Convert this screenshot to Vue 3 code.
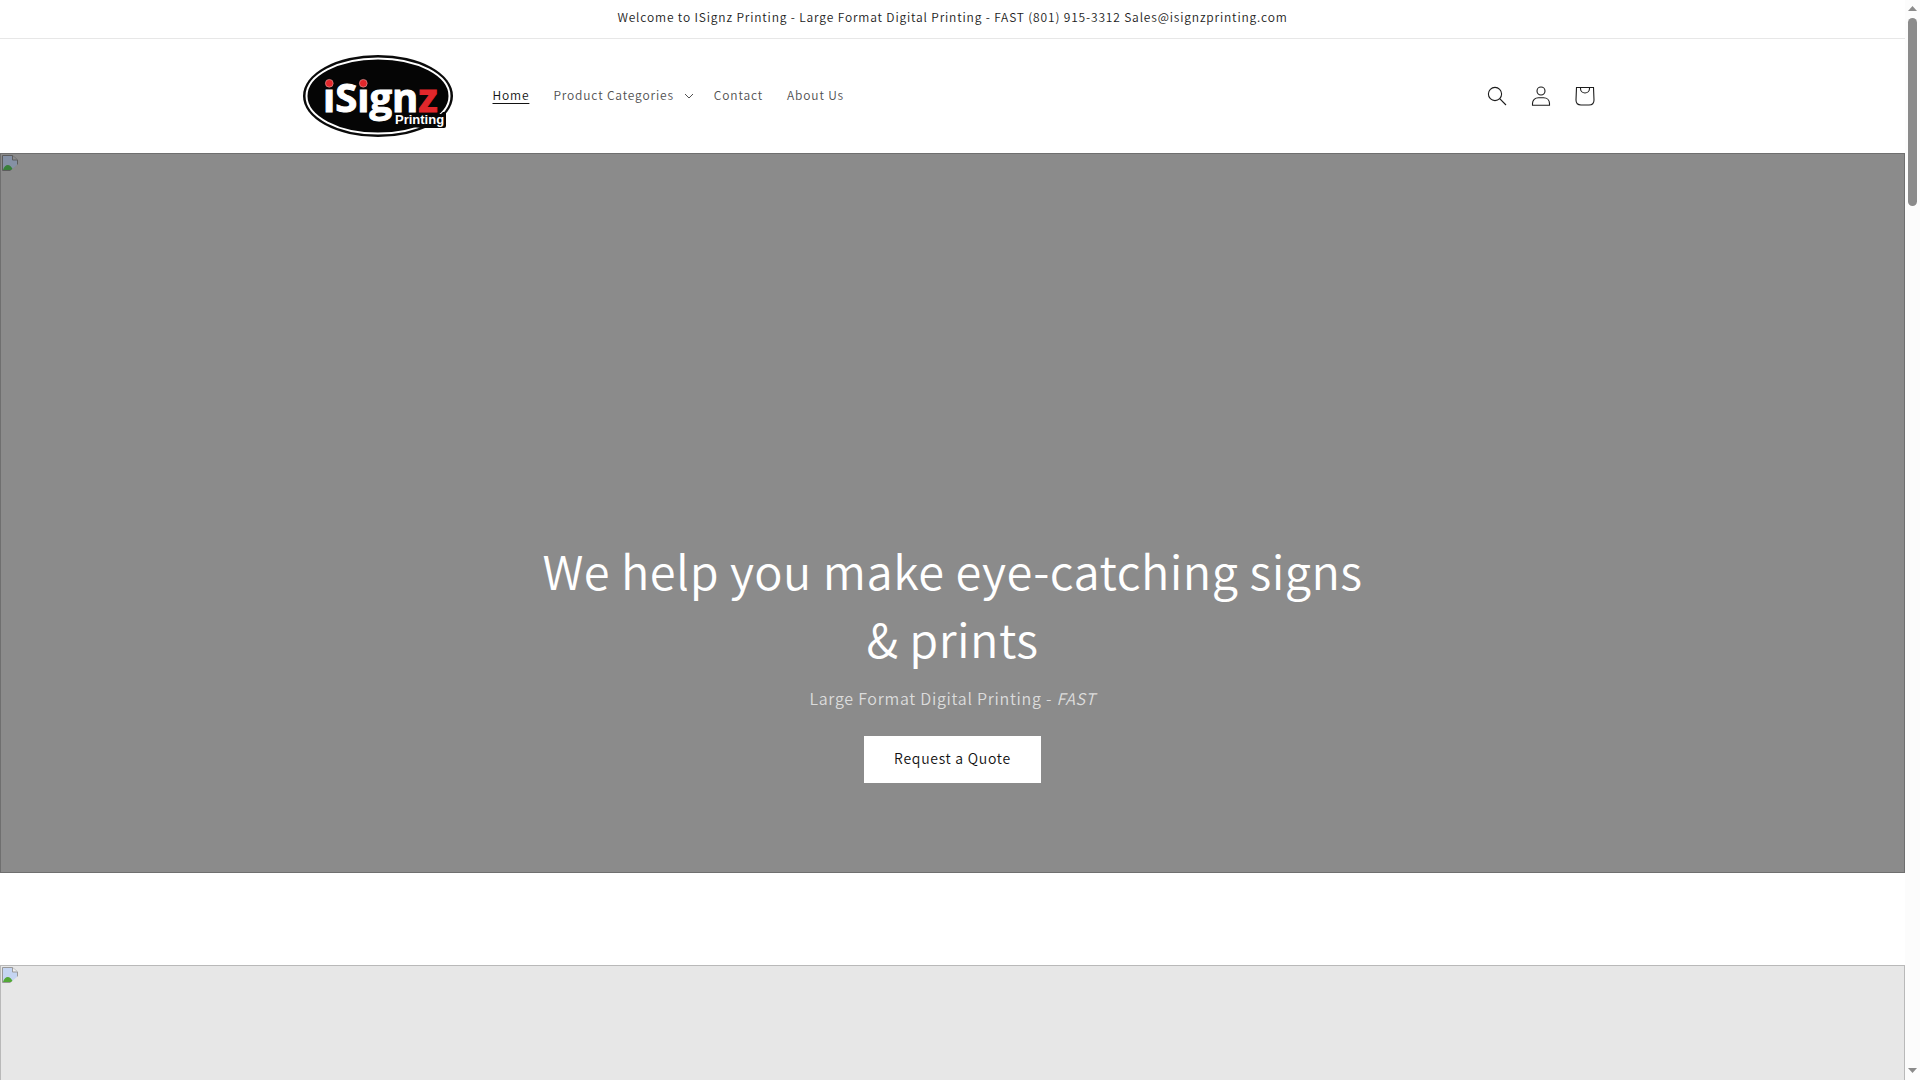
<script setup>
import { ref } from 'vue'

const links = [
  { label: 'Home', active: true },
  { label: 'Product Categories', menu: true },
  { label: 'Contact' },
  { label: 'About Us' },
]
const open = ref(false)
</script>

<template>
  <div class="window">
    <div class="page">
      <p class="announcement">
        Welcome to ISignz Printing - Large Format Digital Printing - FAST (801) 915-3312 Sales@isignzprinting.com
      </p>

      <header class="header">
        <div class="header-inner">
          <a href="#" class="logo" aria-label="iSignz Printing">
            <svg width="150" height="82" viewBox="0 0 150 82">
              <ellipse cx="75" cy="41" rx="75" ry="41" fill="#0a0a0a" />
              <ellipse cx="75" cy="41" rx="71.500" ry="37.500" fill="#050505" stroke="#fff" stroke-width="2" />
              <text class="logo-name" x="20" y="57">iSign<tspan class="logo-z">z</tspan></text>
              <circle cx="26.300" cy="28.500" r="5.500" fill="#050505" />
              <circle cx="60.300" cy="28.500" r="5.500" fill="#050505" />
              <circle cx="26.300" cy="28.300" r="3.900" fill="#e1272b" stroke="#e9a5a5" stroke-width=".6" />
              <circle cx="60.300" cy="28.300" r="3.900" fill="#e1272b" stroke="#e9a5a5" stroke-width=".6" />
              <path d="M91 59H138L140 57H143V71Q143 73 141 73H118L91 70Z" fill="#050505" />
              <text class="logo-sub" x="92" y="69">Printing</text>
            </svg>
          </a>
          <nav class="nav">
            <template v-for="l in links" :key="l.label">
              <button v-if="l.menu" type="button" class="nav-item has-menu" :aria-expanded="open" @click="open = !open">
                {{ l.label }}
                <svg class="caret" width="10" height="6" viewBox="0 0 10 6"><path d="M1 1L5 5L9 1" fill="none" stroke="currentColor" /></svg>
              </button>
              <a v-else href="#" class="nav-item" :class="{ active: l.active }"><span>{{ l.label }}</span></a>
            </template>
          </nav>
          <div class="icons">
            <button type="button" class="icon" aria-label="Search">
              <svg width="20" height="20" viewBox="0 0 20 20"><circle cx="8" cy="8" r="6.600" /><path d="M12.700 12.700L19 19" /></svg>
            </button>
            <a href="#" class="icon" aria-label="Log in">
              <svg width="20" height="20" viewBox="0 0 20 20"><circle cx="10" cy="5" r="4" /><path d="M1.500 19.300V17.500C1.500 14 4 11.700 7.500 11.700H12.500C16 11.700 18.500 14 18.500 17.500V19.300Z" /></svg>
            </a>
            <a href="#" class="icon" aria-label="Cart">
              <svg width="20" height="20" viewBox="0 0 20 20"><path d="M1.500 1.500H18.500L19 14Q19 19 14 19H6Q1 19 1 14Z" /><path d="M5.500 1.500V2.500A4.500 4.500 0 0 0 14.500 2.500V1.500" /></svg>
            </a>
          </div>
        </div>
      </header>

      <section class="banner hero">
        <svg class="broken" width="16" height="16" viewBox="0 0 16 16"><path d="M.5.5H10.5L15.500 5V15.500H.5Z" fill="#8591a5" stroke="#5c5c5c" /><path d="M10.500.5V5H15.500" fill="#8b8b8b" stroke="#5c5c5c" /><path d="M1 15C3 9 8 8 11 15Z" fill="#38803a" /><path d="M8 16L16 9V16Z" fill="#8b8b8b" /></svg>
        <div class="hero-box">
          <h1>We help you make eye-catching signs &amp; prints</h1>
          <p>Large Format Digital Printing - <em>FAST</em></p>
          <a href="#" class="quote">Request a Quote</a>
        </div>
      </section>

      <section class="banner second">
        <svg class="broken" width="16" height="16" viewBox="0 0 16 16"><path d="M.5.5H10.5L15.500 5V15.500H.5Z" fill="#c5d5f2" stroke="#999" /><path d="M10.500.5V5H15.500" fill="#eee" stroke="#999" /><path d="M1 15C3 9 8 8 11 15Z" fill="#54a837" /><path d="M8 16L16 9V16Z" fill="#e7e7e7" /></svg>
      </section>
    </div>

    <div class="scrollbar" aria-hidden="true">
      <svg width="9" height="5" viewBox="0 0 9 5"><path d="M0 5L4.500 0L9 5Z" /></svg>
      <div class="track"><div class="thumb"></div></div>
      <svg width="9" height="5" viewBox="0 0 9 5"><path d="M0 0L4.500 5L9 0Z" /></svg>
    </div>
  </div>
</template>

<style>
body {
  background: #fff;
}
</style>

<style scoped>
.window {
  display: flex;
  height: 100vh;
  overflow: hidden;
  font-family: "Noto Sans CJK SC", "Open Sans", sans-serif;
  font-size: 12px;
  font-weight: 350;
  letter-spacing: 0.06em;
  color: #121212;
}
.page {
  flex: 1;
  min-width: 0;
  overflow: hidden;
}
.announcement {
  margin: 0;
  padding: 6px 20px 10px;
  border-bottom: 1px solid #e7e7e7;
  line-height: 22px;
  letter-spacing: 0.07em;
  text-align: center;
  color: #1c1c1c;
}
.header-inner {
  display: flex;
  align-items: center;
  box-sizing: border-box;
  max-width: 1400px;
  margin: 0 auto;
  padding: 16px 46px 16px 50px;
}
.logo {
  display: block;
  height: 82px;
}
.logo-name {
  font-family: "Open Sans", sans-serif;
  font-size: 40px;
  font-weight: 700;
  letter-spacing: 0;
  fill: #fff;
  stroke: #fff;
  stroke-width: 1px;
}
.logo-z {
  fill: #e1272b;
  stroke: #e1272b;
}
.logo-sub {
  font-family: "Liberation Sans", sans-serif;
  font-size: 13px;
  font-weight: 700;
  letter-spacing: 0;
  fill: #fff;
}
.nav {
  display: flex;
  margin-left: 28px;
  letter-spacing: 0.07em;
}
.nav-item {
  display: flex;
  align-items: center;
  padding: 11px 12px 13px;
  border: 0;
  background: none;
  font: inherit;
  line-height: 20px;
  letter-spacing: inherit;
  color: #505050;
  text-decoration: none;
}
.has-menu {
  padding-right: 8px;
}
.active {
  color: #121212;
}
.active span {
  text-decoration: underline;
  text-underline-offset: 3px;
}
.caret {
  margin: 2px 0 0 10px;
}
.icons {
  display: flex;
  margin-left: auto;
}
.icon {
  display: flex;
  align-items: center;
  justify-content: center;
  width: 44px;
  height: 44px;
  padding: 0;
  border: 0;
  background: none;
}
.icon svg {
  fill: none;
  stroke: #1c1c1c;
  stroke-width: 1.1;
}
.banner {
  position: relative;
  box-sizing: border-box;
}
.broken {
  position: absolute;
  top: 1px;
  left: 1px;
}
.hero {
  display: flex;
  align-items: flex-end;
  justify-content: center;
  min-height: 720px;
  padding-bottom: 89px;
  border: 1px solid #6f6f6f;
  background: #8b8b8b;
}
.hero-box {
  max-width: 850px;
  text-align: center;
}
h1 {
  margin: 0;
  font-size: 47px;
  font-weight: 350;
  line-height: 68px;
  letter-spacing: 0.01em;
  color: #fff;
}
.hero-box p {
  margin: 12px 0 24px;
  font-size: 16px;
  line-height: 28px;
  color: #dcdcdc;
}
.quote {
  display: inline-block;
  padding: 0 30px 2px;
  background: #fff;
  color: #121212;
  font-size: 14px;
  line-height: 45px;
  text-decoration: none;
  vertical-align: top;
}
.second {
  height: 720px;
  margin-top: 92px;
  border: 1px solid #b9b9b9;
  background: #e7e7e7;
}
.scrollbar {
  display: flex;
  flex-direction: column;
  align-items: center;
  box-sizing: border-box;
  width: 15px;
  padding: 6px 0 7px;
  background: #fcfcfc;
  fill: #8b8b8b;
}
.track {
  flex: 1;
  padding: 7px 0;
}
.thumb {
  width: 9px;
  height: 18%;
  border-radius: 5px;
  background: #8b8b8b;
}
</style>
